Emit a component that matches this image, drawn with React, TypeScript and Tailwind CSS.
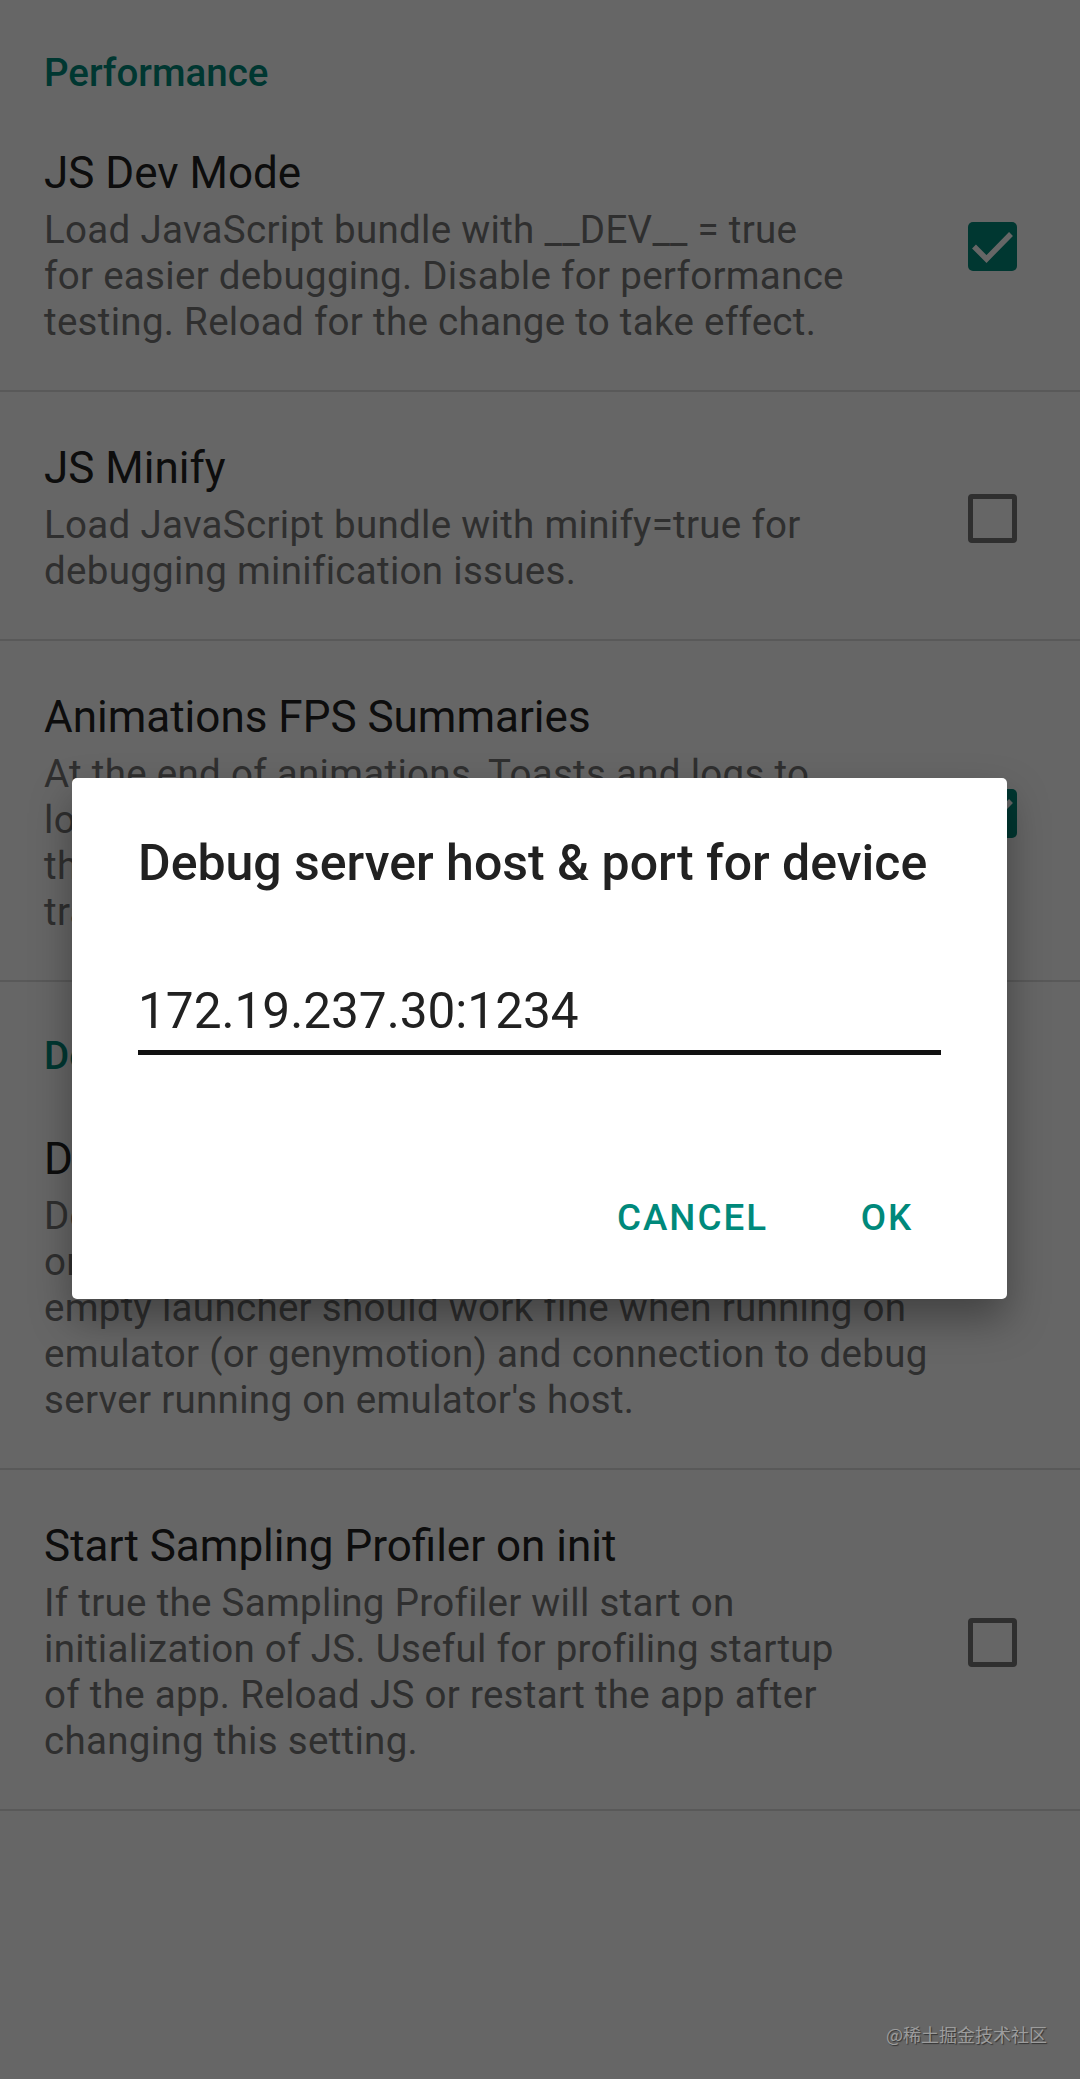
import type { ReactNode } from 'react';

type Pref = {
  title: string;
  lines: string[];
  checkbox?: 'on' | 'off';
};

const performance: Pref[] = [
  {
    title: 'JS Dev Mode',
    lines: [
      'Load JavaScript bundle with __DEV__ = true',
      'for easier debugging. Disable for performance',
      'testing. Reload for the change to take effect.',
    ],
    checkbox: 'on',
  },
  {
    title: 'JS Minify',
    lines: ['Load JavaScript bundle with minify=true for', 'debugging minification issues.'],
    checkbox: 'off',
  },
  {
    title: 'Animations FPS Summaries',
    lines: [
      'At the end of animations, Toasts and logs to',
      'logcat debug information about the FPS during',
      'that transition. Currently only supported for',
      'transitions driven by ScrollViews.',
    ],
    checkbox: 'on',
  },
];

const debugging: Pref[] = [
  {
    title: 'Debug server host & port for device',
    lines: [
      'Debug server host & port for downloading JS bundle',
      'or communicating with JS debugger. With this setting',
      'empty launcher should work fine when running on',
      'emulator (or genymotion) and connection to debug',
      "server running on emulator's host.",
    ],
  },
  {
    title: 'Start Sampling Profiler on init',
    lines: [
      'If true the Sampling Profiler will start on',
      'initialization of JS. Useful for profiling startup',
      'of the app. Reload JS or restart the app after',
      'changing this setting.',
    ],
    checkbox: 'off',
  },
];

const Divider = () => <div className="h-[2px] bg-[#dedede]" />;

const Category = ({ children, spacing }: { children: ReactNode; spacing: string }) => (
  <div className={`${spacing} pl-[44px]`}>
    <div className="text-[38.5px] leading-[44px] font-medium text-[#00897b]">{children}</div>
  </div>
);

const CheckBox = ({ checked }: { checked: boolean }) =>
  checked ? (
    <div className="flex h-[49px] w-[49px] items-center justify-center rounded-[5px] bg-[#00897b]">
      <svg width="49" height="49" viewBox="0 0 49 49">
        <path d="M6 24.5 L18.5 37 L43 12" fill="none" stroke="#ffffff" strokeWidth="5.5" />
      </svg>
    </div>
  ) : (
    <div className="h-[49px] w-[49px] rounded-[4px] border-[5px] border-[#757575]" />
  );

const Row = ({ pref }: { pref: Pref }) => (
  <div className="flex items-center pt-[50px] pb-[45px] pl-[44px] pr-[63px]">
    <div className="flex-1">
      <div className="text-[44px] leading-[52px] text-[#212121]">{pref.title}</div>
      <div className="mt-[8px] text-[38.5px] leading-[46px] tracking-[0.3px] text-[#757575]">
        {pref.lines.map((l) => (
          <div key={l} className="whitespace-nowrap">
            {l}
          </div>
        ))}
      </div>
    </div>
    {pref.checkbox && <CheckBox checked={pref.checkbox === 'on'} />}
  </div>
);

const App = () => {
  return (
    <div className="relative h-[2079px] w-[1080px] overflow-hidden bg-white font-['Roboto',sans-serif]">
      <Category spacing="pt-[51px] pb-[2px]">Performance</Category>
      {performance.map((p) => (
        <div key={p.title}>
          <Row pref={p} />
          <Divider />
        </div>
      ))}
      <Category spacing="pt-[52px] pb-[5px]">Debugging</Category>
      {debugging.map((p) => (
        <div key={p.title}>
          <Row pref={p} />
          <Divider />
        </div>
      ))}

      {/* scrim */}
      <div className="absolute inset-0 bg-black/60" />

      {/* dialog */}
      <div className="absolute left-[72px] top-[778px] flex h-[521px] w-[935px] flex-col rounded-[5px] bg-white px-[66px] pt-[55px] shadow-[0_20px_40px_rgba(0,0,0,0.35)]">
        <div className="shrink-0 whitespace-nowrap text-[50px] leading-[60px] font-medium text-[#212121]">
          Debug server host &amp; port for device
        </div>
        <div className="mt-[90px] shrink-0 border-b-[5px] border-[#111] pb-[11px]">
          <div className="text-[49.5px] leading-[56px] text-[#212121]">172.19.237.30:1234</div>
        </div>
        <div className="-mr-[30px] mt-[107px] flex h-[112px] shrink-0 items-center justify-end gap-[16px]">
          <div className="flex w-[189px] justify-center text-[36.75px] font-medium tracking-[2px] text-[#00897b]">
            CANCEL
          </div>
          <div className="flex w-[168px] justify-center text-[36.75px] font-medium tracking-[2px] text-[#00897b]">
            OK
          </div>
        </div>
      </div>

      <div className="absolute right-[33px] top-[2022px] text-[18px] leading-[24px] text-[#9c9c9c] [text-shadow:1px_1px_1px_rgba(0,0,0,0.5)] font-['Noto_Sans_CJK_SC',sans-serif]">
        @稀土掘金技术社区
      </div>
    </div>
  );
};

export default App;
